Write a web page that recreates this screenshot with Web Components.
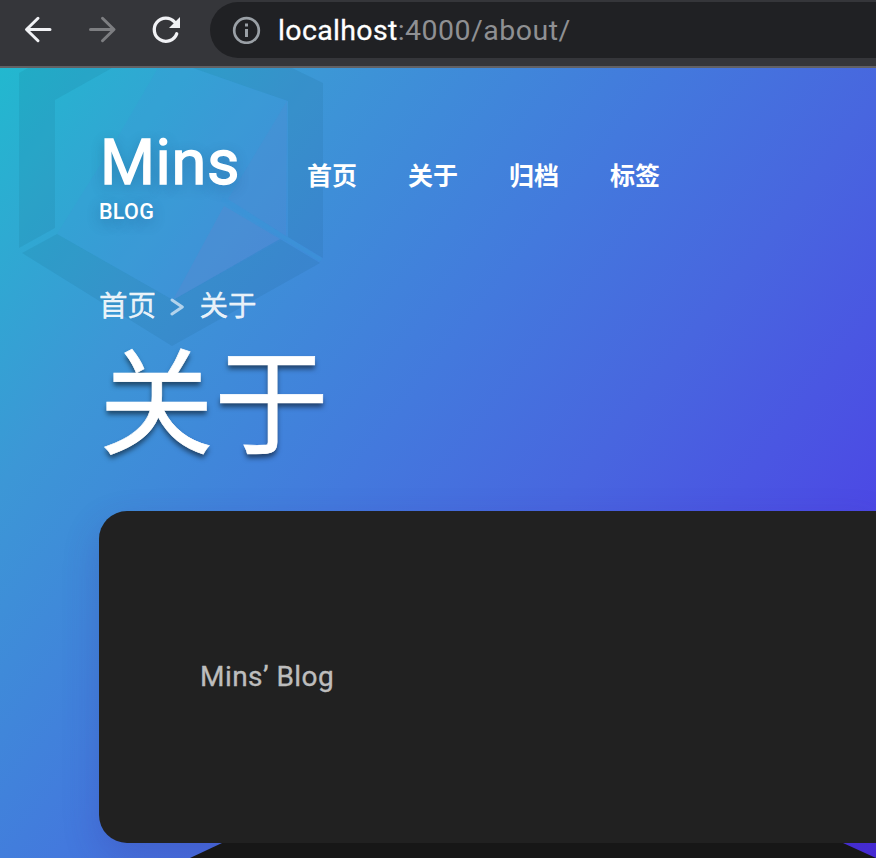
<!DOCTYPE html>
<html lang="zh-CN">
<head>
<meta charset="utf-8">
<title>关于 | Mins</title>
<style>
html,body{margin:0;height:100%;overflow:hidden;background:#171717}
body{font-family:Roboto,"Noto Sans CJK SC",sans-serif}
</style>
</head>
<body>
<browser-window>
  <browser-toolbar slot="bar"><span slot="host">localhost</span><span slot="path">:4000/about/</span></browser-toolbar>
  <blog-page>
    <site-header slot="header">
      <site-logo slot="logo"><span>Mins</span><span slot="sub">BLOG</span></site-logo>
      <nav-link>首页</nav-link><nav-link>关于</nav-link><nav-link>归档</nav-link><nav-link>标签</nav-link>
    </site-header>
    <bread-crumb><span slot="from">首页</span><span slot="to">关于</span></bread-crumb>
    <page-title>关于</page-title>
    <content-card>Mins’ Blog</content-card>
  </blog-page>
</browser-window>
<script>
const define = (name, html) => {
  const tpl = document.createElement('template');
  tpl.innerHTML = html;
  customElements.define(name, class extends HTMLElement {
    constructor() {
      super();
      this.attachShadow({ mode: 'open' }).append(tpl.content.cloneNode(true));
    }
  });
};

define('browser-window', `
<style>:host{display:flex;flex-direction:column;width:876px;height:858px;overflow:hidden}</style>
<slot name="bar"></slot><slot></slot>`);

define('browser-toolbar', `
<style>
:host{display:flex;flex:none;box-sizing:border-box;height:68px;background:#35363a;border-bottom:2px solid #626164;overflow:hidden}
.nav{flex:none;width:210px;height:60px}
.omni{flex:1;display:flex;align-items:center;height:56px;margin-top:2px;background:#202124;border-radius:28px 0 0 28px;padding-left:22px;color:#8f9093;font-size:28.500px;white-space:nowrap}
.omni svg{flex:none;margin-right:17px}
.text{letter-spacing:.48px}
.host{color:#fff;letter-spacing:.35px;-webkit-text-stroke:.3px #fff}
</style>
<svg class="nav" viewBox="0 0 210 60" fill="none" stroke-width="3" stroke-linecap="round" stroke-linejoin="round">
<path stroke="#f1f2f5" d="M50 29.5H27M38 18.3 26.5 29.5 38 40.7"/>
<path stroke="#7d7e81" d="M90.500 29.500H113.500M102.500 18.300 114 29.500 102.500 40.700"/>
<path stroke="#f1f2f5" stroke-width="3.300" d="M176.700 33.800A11.600 11.600 0 1 1 174.600 22"/>
<path fill="#f1f2f5" d="M180 17V28H169Z"/>
</svg>
<div class="omni">
<svg width="29" height="28" viewBox="0 0 29 28"><circle cx="14.500" cy="14.500" r="12.300" fill="none" stroke="#9aa0a6" stroke-width="2.700"/><path fill="#9aa0a6" d="M13 7.600h3v3h-3zM13 13h3v8h-3z"/></svg>
<span class="text"><span class="host"><slot name="host"></slot></span><slot name="path"></slot></span></div>`);

define('page-backdrop', `
<style>
:host{position:absolute;inset:0;z-index:-1;background:linear-gradient(128deg,#22b8cf 0,#2eaad2 110px,#3c97d6 257px,#4379dd 530px,#4866df 710px,#4c47e5 975px,#4628d8 1190px)}
svg{display:block}
</style>
<svg width="876" height="790" viewBox="0 68 876 790">
<g fill="#0c4160" fill-opacity=".085">
<path d="M19 73 28 68H112L55 100V228L19 248Z"/>
<path d="M193 68H292L323 83V258L288 237V101Z"/>
<path d="M22 253 57 234 173 300 280 239 320 263 172 346Z"/>
</g>
<path fill="#4b8fdc" fill-opacity=".12" d="M158 68H193L288 101V237L173 300 57 234 120 133Z"/>
<path fill="#b06cb8" fill-opacity=".06" d="M287 101 228 199 286 236Z"/>
<path fill="#b06cb8" fill-opacity=".1" d="M224 206 280 239 173 300Z"/>
<path stroke="#3a94d6" stroke-opacity=".45" stroke-width="4" d="M222 199 321 260"/>
</svg>`);

define('blog-page', `
<style>
:host{position:relative;z-index:0;flex:1;display:flex;flex-direction:column;box-sizing:border-box;padding-left:99px;color:#fff;overflow:hidden}
</style>
<page-backdrop></page-backdrop><slot name="header"></slot><slot></slot>`);

define('site-header', `
<style>
:host{display:flex;padding-top:64px;height:150px}
.logo{width:208px;flex:none}
nav{display:flex;gap:51px;padding-top:24px}
</style>
<div class="logo"><slot name="logo"></slot></div><nav><slot></slot></nav>`);

define('site-logo', `
<style>
:host{display:block;text-shadow:0 4px 14px rgba(20,50,90,.3)}
.name{font-size:63px;line-height:60px;letter-spacing:.6px;padding:1px 0 0 1px;-webkit-text-stroke:1.400px #fff}
.sub{font-size:21.500px;font-weight:500;line-height:28px;margin-top:5px;letter-spacing:.3px}
</style>
<div class="name"><slot></slot></div><div class="sub"><slot name="sub"></slot></div>`);

define('nav-link', `
<style>:host{display:block;font:700 25px/36px "Noto Sans CJK SC",sans-serif;width:50px;white-space:nowrap}</style>
<slot></slot>`);

define('bread-crumb', `
<style>
:host{display:flex;align-items:center;height:40px;margin-top:2px;font:400 28.500px/40px Roboto,"Noto Sans CJK SC",sans-serif;color:rgba(255,255,255,.9);-webkit-text-stroke:.4px rgba(255,255,255,.9)}
.t{padding-top:5.400px}
svg{margin:5px 14.500px 0 14px}
</style>
<span class="t"><slot name="from"></slot></span>
<svg width="15" height="20" viewBox="0 0 15 20" fill="none" stroke="#fff" stroke-opacity=".62" stroke-width="3" stroke-linecap="round" stroke-linejoin="round"><path d="M2 3 12.300 10 2 17"/></svg>
<span class="t"><slot name="to"></slot></span>`);

define('page-title', `
<style>:host{display:block;box-sizing:border-box;padding-top:12px;font:400 115px/140px Roboto,"Noto Sans CJK SC",sans-serif;height:140px;text-shadow:0 4px 5px rgba(0,0,0,.5);white-space:nowrap;-webkit-text-stroke:.6px #fff}</style>
<slot></slot>`);

define('content-card', `
<style>
:host{position:relative;display:flex;align-items:center;flex:none;box-sizing:border-box;height:332px;margin-top:47px;padding:0 0 1px 101px;background:#212121;border-radius:28px 0 0 28px;box-shadow:0 14px 36px rgba(60,45,150,.24);color:#bdbdbd;font-size:28px;letter-spacing:.45px;-webkit-text-stroke:.35px #bdbdbd}
svg{position:absolute;left:-99px;bottom:-15px}
</style>
<svg width="876" height="15" viewBox="0 0 876 15"><path fill="#171717" d="M190 15 222 0H843L876 15Z"/></svg>
<span><slot></slot></span>`);
</script>
</body>
</html>
